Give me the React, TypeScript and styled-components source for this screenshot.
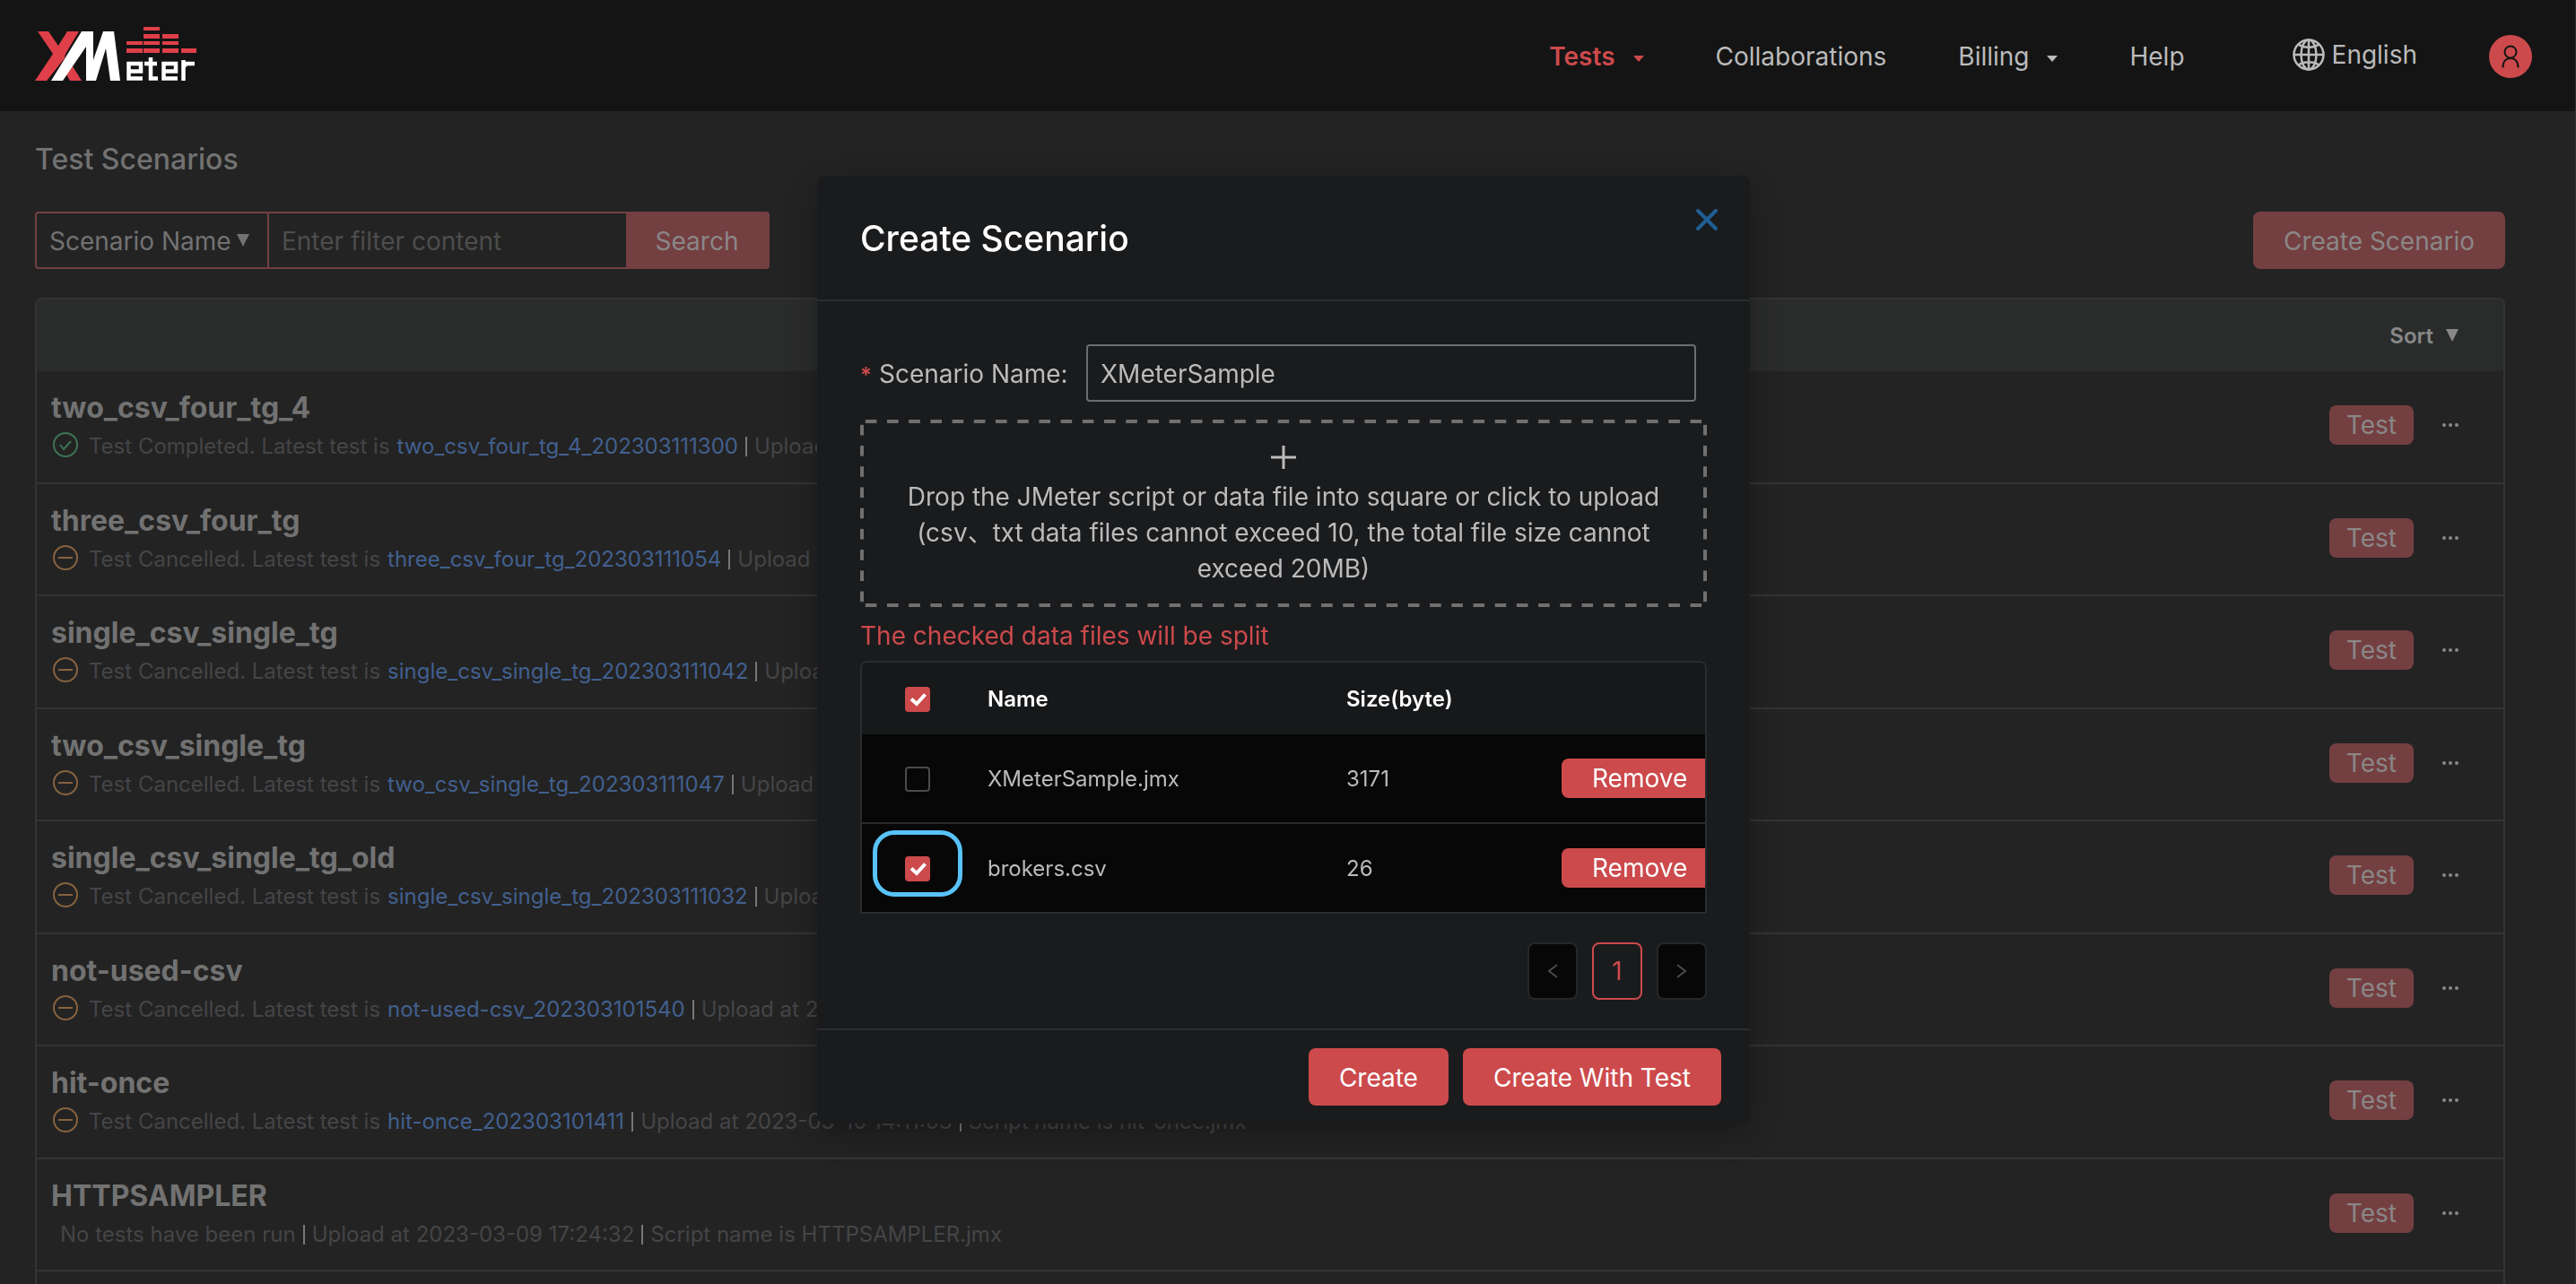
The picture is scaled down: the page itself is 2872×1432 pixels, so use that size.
import React, { useState } from 'react';
import styled, { createGlobalStyle, css } from 'styled-components';

const color = {
  page: '#232323',
  header: '#141414',
  modal: '#1a1b1d',
  red: '#cc4a4c',
  dimRed: '#743f41',
  dimText: '#727272',
  dimButtonText: '#8a8787',
  faint: '#454547',
  line: '#333434',
  text: '#bbbbbb',
  link: '#42608f',
};

const GlobalStyle = createGlobalStyle`
  *, *::before, *::after { box-sizing: border-box; }
  body { margin: 0; background: ${color.page}; }
  body, button, input, select {
    font-family: Inter, "Noto Sans CJK SC", sans-serif;
    font-size: 28px;
  }
  button, input, select { margin: 0; }
  a { text-decoration: none; color: inherit; }
`;

const Page = styled.div`
  display: flex;
  flex-direction: column;
  height: 100vh;
  overflow: hidden;
  border-right: 1px solid #303030;
  color: ${color.text};
`;

const Header = styled.header`
  display: flex;
  align-items: center;
  justify-content: space-between;
  flex: none;
  height: 124px;
  padding: 0 48px 0 39px;
  background: ${color.header};
`;

const Logo = styled.svg`
  display: block;
  width: 180px;
  height: 60px;
  margin-bottom: 4px;
`;

const Nav = styled.nav`
  display: flex;
  align-items: center;
  gap: 80px;
  padding-top: 2px;
  line-height: 44px;
`;

const NavLink = styled.a<{ $active?: boolean }>`
  display: flex;
  align-items: center;
  gap: 20px;
  color: ${p => (p.$active ? color.red : color.text)};
  font-weight: ${p => (p.$active ? 600 : 400)};
`;

const Caret = styled.svg`
  width: 12px;
  height: 8px;
  margin-top: 6px;
  fill: currentColor;
`;

const Language = styled.button`
  display: flex;
  align-items: center;
  gap: 8px;
  margin-left: 40px;
  padding: 0 0 4px;
  border: 0;
  background: none;
  color: ${color.text};
`;

const Avatar = styled.button`
  display: grid;
  place-items: center;
  width: 48px;
  height: 48px;
  padding: 0;
  border: 0;
  border-radius: 50%;
  background: ${color.red};
  color: #141414;
`;

const Main = styled.main`
  display: flex;
  flex-direction: column;
  padding: 32px 78px 0 39px;
`;

const PageTitle = styled.h1`
  margin: 0;
  color: ${color.dimText};
  font-size: 32px;
  font-weight: 500;
  line-height: 44px;
`;

const Toolbar = styled.div`
  display: flex;
  justify-content: space-between;
  margin: 36px 0 32px;
`;

const Filter = styled.form`
  display: flex;
  height: 64px;
  border: 2px solid ${color.dimRed};
  border-radius: 4px;
`;

const SelectWrap = styled.label`
  display: flex;
  align-items: center;
  padding-right: 20px;
  border-right: 2px solid ${color.dimRed};
  color: ${color.dimText};
`;

const FieldSelect = styled.select`
  appearance: none;
  padding: 2px 6px 0 14px;
  border: 0;
  outline: 0;
  background: transparent;
  color: inherit;
`;

const FilterInput = styled.input`
  width: 398px;
  padding: 2px 14px 0;
  border: 0;
  outline: 0;
  background: transparent;
  color: ${color.dimText};
  &::placeholder { color: #4d4d4d; opacity: 1; }
`;

const SearchButton = styled.button`
  width: 158px;
  padding: 2px 0 0;
  border: 0;
  background: ${color.dimRed};
  color: ${color.dimButtonText};
`;

const Triangle = styled.svg`
  width: 14px;
  height: 14px;
  fill: currentColor;
`;

const Button = styled.button<{ $dim?: boolean; $small?: boolean }>`
  flex: none;
  height: ${p => (p.$small ? 44 : 64)}px;
  padding: ${p => (p.$small ? 0 : 2)}px ${p => (p.$small && p.$dim ? 19 : 34)}px 0;
  border: 0;
  border-radius: 8px;
  background: ${p => (p.$dim ? color.dimRed : color.red)};
  color: ${p => (p.$dim ? color.dimButtonText : '#ffffff')};
  white-space: nowrap;
`;

const Panel = styled.section`
  border: 2px solid ${color.line};
  border-radius: 8px 8px 0 0;
`;

const PanelHead = styled.div`
  display: flex;
  justify-content: flex-end;
  height: 80px;
  padding-right: 50px;
  border-radius: 6px 6px 0 0;
  background: #2a2c2b;
`;

const SortButton = styled.button`
  display: flex;
  align-items: center;
  gap: 14px;
  padding: 0;
  border: 0;
  background: none;
  color: #888888;
  font-size: 24px;
  font-weight: 600;
`;

const List = styled.ul`
  margin: 0;
  padding: 0;
  list-style: none;
`;

const Row = styled.li`
  display: flex;
  align-items: center;
  gap: 32px;
  height: 126px;
  padding: 0 50px 4px 16px;
  border-bottom: 2px solid ${color.line};
  &:nth-child(even) { height: 125px; }
`;

const RowText = styled.div`
  flex: 1;
  min-width: 0;
  padding-top: 4px;
`;

const RowTitle = styled.h2`
  margin: 0;
  color: ${color.dimText};
  font-size: 32px;
  font-weight: 700;
  line-height: 44px;
`;

const RowMeta = styled.div`
  display: flex;
  align-items: center;
  gap: 8px;
  color: ${color.faint};
  font-size: 24px;
  line-height: 42px;
  white-space: nowrap;
  svg { margin: 0 4px 4px 2px; }
  a { color: ${color.link}; }
`;

const PlainStatus = styled.span`
  padding-left: 10px;
`;

const Divider = styled.span`
  width: 2px;
  height: 22px;
  background: #777777;
`;

const MoreButton = styled.button`
  display: flex;
  gap: 3px;
  padding: 0;
  border: 0;
  background: none;
  i {
    width: 4px;
    height: 4px;
    border-radius: 50%;
    background: #888888;
  }
`;

const Mask = styled.div`
  position: fixed;
  inset: 0;
  display: flex;
  align-items: flex-start;
  justify-content: center;
  padding: 196px 10px 0 0;
`;

const Modal = styled.div`
  width: 1040px;
  border-radius: 8px;
  background: ${color.modal};
  box-shadow: 0 12px 32px rgba(0, 0, 0, 0.28);
`;

const ModalHead = styled.div`
  display: flex;
  justify-content: space-between;
  height: 140px;
  padding: 36px 34px 0 48px;
  border-bottom: 2px solid #2c2d2f;
`;

const ModalTitle = styled.h2`
  margin: 0;
  color: #ffffff;
  font-size: 39px;
  font-weight: 500;
  line-height: 68px;
`;

const CloseButton = styled.button`
  align-self: flex-start;
  padding: 0;
  border: 0;
  background: none;
  color: #1f5f95;
  svg { display: block; }
`;

const ModalBody = styled.div`
  padding: 48px 48px 32px;
`;

const FormRow = styled.div`
  display: flex;
  align-items: center;
  justify-content: space-between;
  padding-right: 12px;
  label {
    padding-top: 2px;
    white-space: nowrap;
  }
`;

const Required = styled.span`
  margin-right: 8px;
  color: ${color.red};
  font-weight: 600;
  font-size: 24px;
`;

const NameInput = styled.input`
  width: 680px;
  height: 64px;
  padding: 2px 14px 0;
  border: 2px solid #6c6d6e;
  border-radius: 4px;
  outline: 0;
  background: transparent;
  color: ${color.text};
`;

const dash = '#707070';
const dashX = `linear-gradient(90deg, transparent 25%, ${dash} 25% 75%, transparent 75%)`;
const dashY = `linear-gradient(180deg, transparent 25%, ${dash} 25% 75%, transparent 75%)`;

const DropZone = styled.button`
  display: flex;
  flex-direction: column;
  align-items: center;
  gap: 10px;
  width: 100%;
  margin-top: 20px;
  padding: 28px 40px 23px;
  border: 0;
  background:
    ${dashX} top left / 24px 4px round no-repeat,
    ${dashX} bottom left / 24px 4px round no-repeat,
    ${dashY} top left / 4px 24px no-repeat round,
    ${dashY} top right / 4px 24px no-repeat round;
  color: ${color.text};
  line-height: 40px;
`;

const Warning = styled.p`
  margin: 10px 0 6px;
  color: ${color.red};
  line-height: 44px;
`;

const TableFrame = styled.div`
  overflow: hidden;
  border: 2px solid #2a2b2d;
  border-bottom: 0;
  border-radius: 8px 8px 0 0;
`;

const FileTable = styled.table`
  width: 100%;
  table-layout: fixed;
  border-collapse: separate;
  border-spacing: 0;
  font-size: 24px;
  text-align: left;
  th, td { padding: 0 16px; white-space: nowrap; }
  th:first-child, td:first-child { width: 124px; padding: 0; text-align: center; }
  th:nth-child(2) { width: 400px; }
  th:nth-child(3) { width: 240px; }
  td:last-child { padding: 0 0 0 16px; }
  th { height: 80px; background: #16181a; color: #ffffff; font-weight: 600; }
  td { height: 100px; background: #070707; border-bottom: 2px solid #2a2b2d; }
`;

const CheckCell = styled.label`
  position: relative;
  display: inline-grid;
  vertical-align: middle;
`;

const CheckBox = styled.input`
  appearance: none;
  width: 28px;
  height: 28px;
  margin: 0;
  border: 2px solid #4b4b4b;
  border-radius: 4px;
  background: transparent;
  &:checked { border-color: ${color.red}; background: ${color.red}; }
`;

const Tick = styled.svg`
  position: absolute;
  inset: 0;
  pointer-events: none;
`;

const Highlight = styled.span`
  position: absolute;
  inset: -29px -36px -17px;
  border: 5px solid #58c2f8;
  border-radius: 24px;
  pointer-events: none;
`;

const Pagination = styled.nav`
  display: flex;
  justify-content: flex-end;
  gap: 16px;
  margin-top: 32px;
`;

const PageButton = styled.button<{ $active?: boolean }>`
  display: grid;
  place-items: center;
  width: 56px;
  height: 64px;
  padding: 0;
  border: 2px solid #262729;
  border-radius: 8px;
  background: #070707;
  color: #4a4a4a;
  ${p => p.$active && css`
    border-color: ${color.red};
    background: transparent;
    color: ${color.red};
  `}
`;

const ModalFoot = styled.div`
  display: flex;
  justify-content: flex-end;
  gap: 16px;
  padding: 20px 32px;
  border-top: 2px solid #2c2d2f;
`;

const CaretIcon = () => (
  <Caret viewBox="0 0 12 8"><path d="M0 0h12L6 7z" /></Caret>
);

const TriangleIcon = () => (
  <Triangle viewBox="0 0 14 14"><path d="M0 0h14L7 14z" /></Triangle>
);

const LogoMark = () => (
  <Logo viewBox="0 0 180 60" role="img" aria-label="XMeter">
    <g fill="#df3f49">
      <path d="M3 5h12l11 16L36 5h13L34 30l-1 5L13 60H0L20 30z" />
      <path d="M42 44l10 16H39l-4-7z" />
      <path d="M121 0h18v4h-18zM121 8h18v5h-18zM142 8h18v5h-18zM102 16h18v4h-18zM121 16h18v4h-18zM142 16h18v4h-18zM102 24h18v5h-18zM121 24h18v5h-18zM142 24h18v5h-18zM163 24h17v5h-17z" />
    </g>
    <path fill="#ffffff" d="M52 5h13v32L76 5h12l7 55H84l-5-36-11 36H57V22L31 60H18z" />
    <g fill="none" stroke="#ffffff" strokeWidth="4.500">
      <path d="M120 57.500h-15.500V41H118v8.500h-13" />
      <path d="M129 34v23.500h8M122 41h14" />
      <path d="M159 57.500h-15.500V41H157v8.500h-13" />
      <path d="M165.500 60V37M165 45l4-4h9" />
    </g>
  </Logo>
);

const GlobeIcon = () => (
  <svg width="36" height="36" viewBox="0 0 36 36" fill="none" stroke="currentColor" strokeWidth="2.500">
    <circle cx="18" cy="18" r="16.500" />
    <ellipse cx="18" cy="18" rx="8.500" ry="16.500" />
    <path d="M18 1v34M1 18h34M6 6c6 5 18 5 24 0M6 30c6-5 18-5 24 0" />
  </svg>
);

const UserIcon = () => (
  <svg width="20" height="26" viewBox="0 0 20 26" fill="none" stroke="currentColor" strokeWidth="2">
    <circle cx="10" cy="8" r="6.500" />
    <path d="M1.500 25.500c0-7 3.500-10.500 8.500-10.500s8.500 3.500 8.500 10.500" />
  </svg>
);

const StatusIcon = ({ done }: { done: boolean }) => (
  <svg width="28" height="28" viewBox="0 0 28 28" fill="none" stroke={done ? '#3d7454' : '#87623f'} strokeWidth="2">
    <circle cx="14" cy="14" r="13" />
    {done ? <path d="M8 14l4 5 8-9" /> : <path d="M6 14h16" />}
  </svg>
);

type Scenario = { name: string; run?: string; done?: boolean; uploaded: string };

const scenarios: Scenario[] = [
  { name: 'two_csv_four_tg_4', run: 'two_csv_four_tg_4_202303111300', done: true, uploaded: '2023-03-11 12:58:21' },
  { name: 'three_csv_four_tg', run: 'three_csv_four_tg_202303111054', uploaded: '2023-03-11 10:53:40' },
  { name: 'single_csv_single_tg', run: 'single_csv_single_tg_202303111042', uploaded: '2023-03-11 10:41:12' },
  { name: 'two_csv_single_tg', run: 'two_csv_single_tg_202303111047', uploaded: '2023-03-11 10:36:05' },
  { name: 'single_csv_single_tg_old', run: 'single_csv_single_tg_202303111032', uploaded: '2023-03-11 10:31:47' },
  { name: 'not-used-csv', run: 'not-used-csv_202303101540', uploaded: '2023-03-10 15:39:30' },
  { name: 'hit-once', run: 'hit-once_202303101411', uploaded: '2023-03-10 14:11:03' },
  { name: 'HTTPSAMPLER', uploaded: '2023-03-09 17:24:32' },
];

const ScenarioRow = ({ name, run, done, uploaded }: Scenario) => (
  <Row>
    <RowText>
      <RowTitle>{name}</RowTitle>
      <RowMeta>
        {run ? (
          <>
            <StatusIcon done={!!done} />
            <span>Test {done ? 'Completed' : 'Cancelled'}. Latest test is</span>
            <a href="#report">{run}</a>
          </>
        ) : (
          <PlainStatus>No tests have been run</PlainStatus>
        )}
        <Divider />
        <span>Upload at {uploaded}</span>
        <Divider />
        <span>Script name is {name}.jmx</span>
      </RowMeta>
    </RowText>
    <Button type="button" $dim $small>Test</Button>
    <MoreButton type="button" aria-label={`More actions for ${name}`}><i /><i /><i /></MoreButton>
  </Row>
);

type CheckProps = { label: string; checked: boolean; highlight?: boolean; onChange: () => void };

const Check = ({ label, checked, highlight, onChange }: CheckProps) => (
  <CheckCell>
    <CheckBox type="checkbox" aria-label={label} checked={checked} onChange={onChange} />
    {checked && (
      <Tick width="28" height="28" viewBox="0 0 28 28" fill="none" stroke="#ffffff" strokeWidth="4">
        <path d="M7 13.500l6 5.500L22.500 8.500" />
      </Tick>
    )}
    {highlight && <Highlight />}
  </CheckCell>
);

const files = [
  { name: 'XMeterSample.jmx', size: 3171 },
  { name: 'brokers.csv', size: 26 },
];

export default function App() {
  const [name, setName] = useState('XMeterSample');
  const [all, setAll] = useState(true);
  const [split, setSplit] = useState<string[]>(['brokers.csv']);
  const toggle = (file: string) =>
    setSplit(s => (s.includes(file) ? s.filter(f => f !== file) : [...s, file]));

  return (
    <Page>
      <GlobalStyle />
      <Header>
        <LogoMark />
        <Nav>
          <NavLink href="#tests" $active>Tests <CaretIcon /></NavLink>
          <NavLink href="#collaborations">Collaborations</NavLink>
          <NavLink href="#billing">Billing <CaretIcon /></NavLink>
          <NavLink href="#help">Help</NavLink>
          <Language type="button"><GlobeIcon />English</Language>
          <Avatar type="button" aria-label="Account"><UserIcon /></Avatar>
        </Nav>
      </Header>

      <Main>
        <PageTitle>Test Scenarios</PageTitle>
        <Toolbar>
          <Filter>
            <SelectWrap>
              <FieldSelect aria-label="Filter by"><option>Scenario Name</option></FieldSelect>
              <TriangleIcon />
            </SelectWrap>
            <FilterInput aria-label="Filter content" placeholder="Enter filter content" />
            <SearchButton type="button">Search</SearchButton>
          </Filter>
          <Button type="button" $dim>Create Scenario</Button>
        </Toolbar>
        <Panel>
          <PanelHead>
            <SortButton type="button">Sort <TriangleIcon /></SortButton>
          </PanelHead>
          <List>
            {scenarios.map(s => <ScenarioRow key={s.name} {...s} />)}
            <Row />
          </List>
        </Panel>
      </Main>

      <Mask>
        <Modal role="dialog" aria-labelledby="modal-title">
          <ModalHead>
            <ModalTitle id="modal-title">Create Scenario</ModalTitle>
            <CloseButton type="button" aria-label="Close">
              <svg width="28" height="26" viewBox="0 0 28 26" fill="none" stroke="currentColor" strokeWidth="4" strokeLinecap="round">
                <path d="M4 3l20 20M24 3L4 23" />
              </svg>
            </CloseButton>
          </ModalHead>
          <ModalBody>
            <FormRow>
              <label htmlFor="scenario-name"><Required>*</Required>Scenario Name:</label>
              <NameInput id="scenario-name" value={name} onChange={e => setName(e.target.value)} />
            </FormRow>
            <DropZone type="button">
              <svg width="28" height="28" viewBox="0 0 28 28" stroke="currentColor" strokeWidth="3">
                <path d="M14 1v26M0 14h28" />
              </svg>
              <span>
                Drop the JMeter script or data file into square or click to upload
                <br />
                (csv、txt data files cannot exceed 10, the total file size cannot
                <br />
                exceed 20MB)
              </span>
            </DropZone>
            <Warning>The checked data files will be split</Warning>
            <TableFrame>
              <FileTable>
                <thead>
                  <tr>
                    <th><Check label="Select all" checked={all} onChange={() => setAll(!all)} /></th>
                    <th>Name</th>
                    <th>Size(byte)</th>
                    <th />
                  </tr>
                </thead>
                <tbody>
                  {files.map(f => (
                    <tr key={f.name}>
                      <td>
                        <Check
                          label={f.name}
                          checked={split.includes(f.name)}
                          highlight={f.name === 'brokers.csv'}
                          onChange={() => toggle(f.name)}
                        />
                      </td>
                      <td>{f.name}</td>
                      <td>{f.size}</td>
                      <td><Button type="button" $small>Remove</Button></td>
                    </tr>
                  ))}
                </tbody>
              </FileTable>
            </TableFrame>
            <Pagination aria-label="Pages">
              <PageButton type="button" aria-label="Previous page">
                <svg width="20" height="20" viewBox="0 0 20 20" fill="none" stroke="currentColor" strokeWidth="2"><path d="M15 3L6 10l9 7" /></svg>
              </PageButton>
              <PageButton type="button" $active>1</PageButton>
              <PageButton type="button" aria-label="Next page">
                <svg width="20" height="20" viewBox="0 0 20 20" fill="none" stroke="currentColor" strokeWidth="2"><path d="M5 3l9 7-9 7" /></svg>
              </PageButton>
            </Pagination>
          </ModalBody>
          <ModalFoot>
            <Button type="button">Create</Button>
            <Button type="button">Create With Test</Button>
          </ModalFoot>
        </Modal>
      </Mask>
    </Page>
  );
}
